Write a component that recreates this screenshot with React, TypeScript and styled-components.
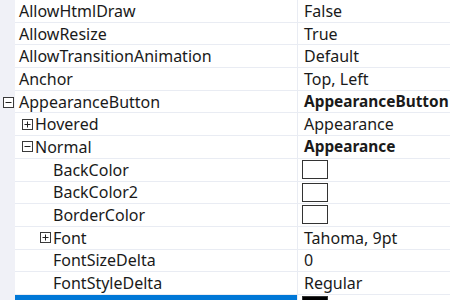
import styled, { createGlobalStyle } from 'styled-components';

const GRID_LINE = '#e9ecf3';
const MARGIN_BG = '#f0f1f7';
const ROW_H = 22.7;

const Global = createGlobalStyle`
  html, body {
    margin: 0;
    background: #ffffff;
    overflow: hidden;
  }
`;

const Grid = styled.div`
  width: 450px;
  height: 300px;
  overflow: hidden;
  background: ${MARGIN_BG};
  font-family: 'Noto Sans', 'Open Sans', sans-serif;
  font-size: 16px;
  color: #1a1a1a;
`;

const Row = styled.div`
  display: grid;
  grid-template-columns: 15px 282px 1px 1fr;
  height: ${ROW_H}px;
  box-sizing: border-box;
`;

const Margin = styled.div`
  background: ${MARGIN_BG};
  display: flex;
  align-items: center;
  padding-left: 3px;
`;

const NameCell = styled.div<{ $indent: number; $selected?: boolean }>`
  display: flex;
  align-items: center;
  gap: 2px;
  padding-left: ${({ $indent }) => $indent}px;
  background: ${({ $selected }) => ($selected ? '#0078d7' : '#ffffff')};
  color: ${({ $selected }) => ($selected ? '#ffffff' : 'inherit')};
  border-bottom: 1px solid ${GRID_LINE};
  white-space: nowrap;
  overflow: hidden;
  line-height: 1;
`;

const Divider = styled.div`
  background: ${GRID_LINE};
`;

const ValueCell = styled.div<{ $bold?: boolean }>`
  display: flex;
  align-items: center;
  gap: 8px;
  padding-left: 6px;
  background: #ffffff;
  border-bottom: 1px solid ${GRID_LINE};
  font-weight: ${({ $bold }) => ($bold ? 700 : 400)};
  font-size: ${({ $bold }) => ($bold ? '15.4px' : '16px')};
  white-space: nowrap;
  overflow: hidden;
  line-height: 1;
`;

const Swatch = styled.div<{ $fill: string }>`
  width: 26px;
  height: 19px;
  box-sizing: border-box;
  border: 1px solid #333;
  background: ${({ $fill }) => $fill};
  flex-shrink: 0;
  margin-left: -2px;
  align-self: flex-start;
  margin-top: 1px;
`;

const Muted = styled.span`
  color: #c4c4c4;
`;

function Expander({ open }: { open: boolean }): JSX.Element {
  return (
    <svg width="11" height="11" viewBox="0 0 11 11" style={{ flexShrink: 0 }}>
      <rect x="0.5" y="0.5" width="10" height="10" fill="#fff" stroke="#3a3a3a" />
      <line x1="2.5" y1="5.5" x2="8.5" y2="5.5" stroke="#222" />
      {!open && <line x1="5.5" y1="2.5" x2="5.5" y2="8.5" stroke="#222" />}
    </svg>
  );
}

type Prop = {
  name: string;
  value?: string;
  level: 0 | 1 | 2;
  expander?: 'open' | 'closed';
  bold?: boolean;
  swatch?: string;
  selected?: boolean;
};

const props: Prop[] = [
  { name: 'AllowHtmlDraw', value: 'False', level: 0 },
  { name: 'AllowResize', value: 'True', level: 0 },
  { name: 'AllowTransitionAnimation', value: 'Default', level: 0 },
  { name: 'Anchor', value: 'Top, Left', level: 0 },
  { name: 'AppearanceButton', value: 'AppearanceButton', level: 0, expander: 'open', bold: true },
  { name: 'Hovered', value: 'Appearance', level: 1, expander: 'closed' },
  { name: 'Normal', value: 'Appearance', level: 1, expander: 'open', bold: true },
  { name: 'BackColor', level: 2, swatch: '#ffffff' },
  { name: 'BackColor2', level: 2, swatch: '#ffffff' },
  { name: 'BorderColor', level: 2, swatch: '#ffffff' },
  { name: 'Font', value: 'Tahoma, 9pt', level: 2, expander: 'closed' },
  { name: 'FontSizeDelta', value: '0', level: 2 },
  { name: 'FontStyleDelta', value: 'Regular', level: 2 },
  { name: 'ForeColor', value: 'Black', level: 2, swatch: '#000000', selected: true },
];

function indentFor(p: Prop): number {
  if (p.level === 0) return 4;
  if (p.level === 1) return 7;
  return p.expander ? 25 : 38;
}

export default function App(): JSX.Element {
  return (
    <>
      <Global />
      <Grid>
        {props.map((p) => (
          <Row key={p.name}>
            <Margin>{p.level === 0 && p.expander && <Expander open={p.expander === 'open'} />}</Margin>
            <NameCell $indent={indentFor(p)} $selected={p.selected}>
              {p.level > 0 && p.expander && <Expander open={p.expander === 'open'} />}
              <span>{p.name}</span>
            </NameCell>
            <Divider />
            <ValueCell $bold={p.bold}>
              {p.swatch && <Swatch $fill={p.swatch} />}
              {p.value && (p.swatch ? <Muted>{p.value}</Muted> : <span>{p.value}</span>)}
            </ValueCell>
          </Row>
        ))}
      </Grid>
    </>
  );
}
